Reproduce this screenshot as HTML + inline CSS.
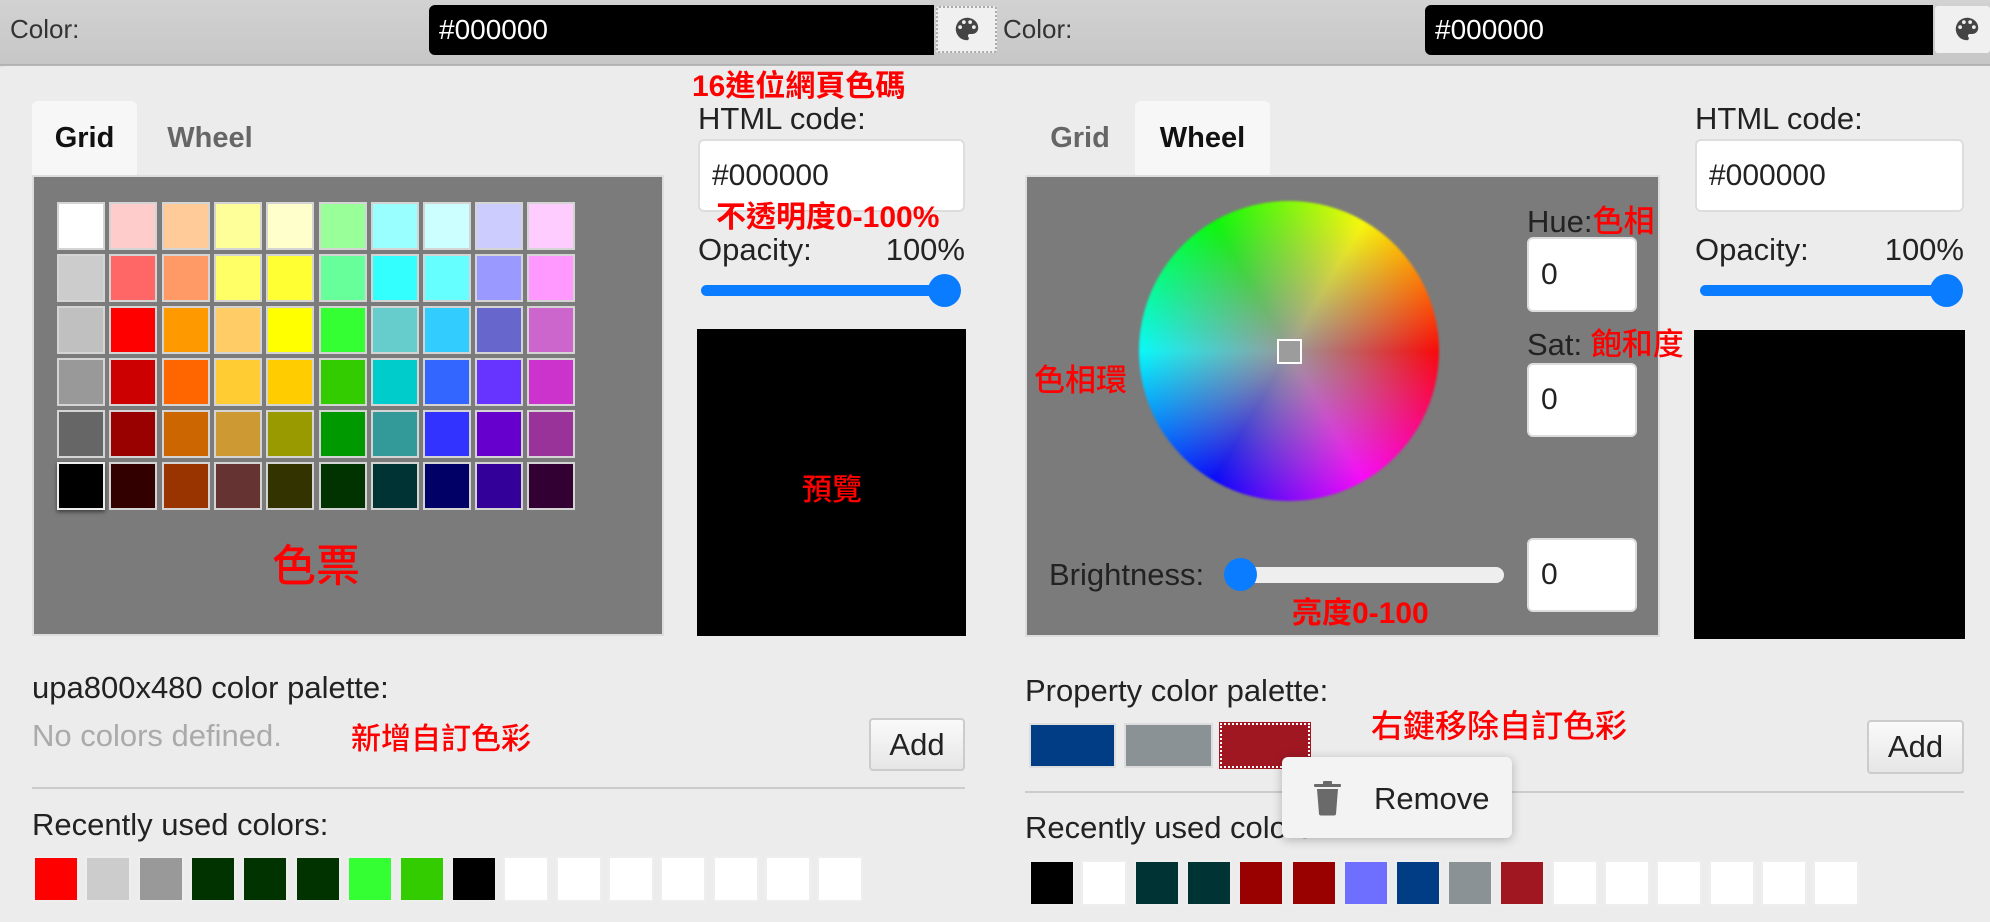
<!DOCTYPE html>
<html><head><meta charset="utf-8"><style>
*{box-sizing:border-box;margin:0;padding:0}
body{width:1990px;height:922px;overflow:hidden;background:#ececec;font-family:"Liberation Sans","Noto Sans CJK TC",sans-serif;color:#222;position:relative}
.a{position:absolute}
.bar{top:0;height:66px;background:linear-gradient(#d2d2d2,#c6c6c6)}
.lbl{font-size:26px;color:#333;line-height:30px}
.blk{background:#000;color:#fff;font-size:28px;line-height:50px;padding-left:10px;border-radius:6px 0 0 6px}
.pbtn{background:#f0f0f0;border-radius:3px}
.red{color:#f00;font-weight:bold;font-family:"Liberation Sans","Noto Sans CJK TC",sans-serif}
.redn{color:#f00;font-family:"Noto Sans CJK TC",sans-serif;font-weight:500}
.tab{font-size:29px;font-weight:bold;line-height:74px;text-align:center}
.gray{background:#7b7b7b;border:2px solid #ddd}
.sw{position:absolute;width:48px;height:48px;border:2px solid #d4d4d4}
.t{font-size:31px;line-height:34px;color:#222}
.inp{background:#fff;border:2px solid #ddd;border-radius:6px;font-size:30px;padding-left:12px}
.btn{background:linear-gradient(#fafafa,#e6e6e6);border:2px solid #ccc;border-radius:4px;font-size:31px;text-align:center}
.rs{position:absolute;width:46px;height:46px;border:2px solid #eee}
</style></head><body>
<div class="a bar" style="left:0;width:1990px"></div>
<div class="a lbl" style="left:10px;top:14px">Color:</div>
<div class="a blk" style="left:429px;top:5px;width:505px;height:50px">#000000</div>
<div class="a pbtn" style="left:936px;top:6px;width:61px;height:47px;border:2px dotted #aaa"></div>
<svg class="a" style="left:952px;top:14px" width="30" height="30" viewBox="0 0 24 24"><path fill="#444" d="M12 3a9 9 0 0 0 0 18c.8 0 1.5-.7 1.5-1.5 0-.4-.1-.7-.4-1-.2-.3-.4-.6-.4-1 0-.8.7-1.5 1.5-1.5H16c2.8 0 5-2.2 5-5 0-4.4-4-8-9-8zm-5.5 9a1.5 1.5 0 1 1 0-3 1.5 1.5 0 0 1 0 3zm3-4a1.5 1.5 0 1 1 0-3 1.5 1.5 0 0 1 0 3zm5 0a1.5 1.5 0 1 1 0-3 1.5 1.5 0 0 1 0 3zm3 4a1.5 1.5 0 1 1 0-3 1.5 1.5 0 0 1 0 3z"/></svg>
<div class="a lbl" style="left:1003px;top:14px">Color:</div>
<div class="a blk" style="left:1425px;top:5px;width:508px;height:50px">#000000</div>
<div class="a pbtn" style="left:1935px;top:6px;width:55px;height:47px"></div>
<svg class="a" style="left:1952px;top:14px" width="30" height="30" viewBox="0 0 24 24"><path fill="#444" d="M12 3a9 9 0 0 0 0 18c.8 0 1.5-.7 1.5-1.5 0-.4-.1-.7-.4-1-.2-.3-.4-.6-.4-1 0-.8.7-1.5 1.5-1.5H16c2.8 0 5-2.2 5-5 0-4.4-4-8-9-8zm-5.5 9a1.5 1.5 0 1 1 0-3 1.5 1.5 0 0 1 0 3zm3-4a1.5 1.5 0 1 1 0-3 1.5 1.5 0 0 1 0 3zm5 0a1.5 1.5 0 1 1 0-3 1.5 1.5 0 0 1 0 3zm3 4a1.5 1.5 0 1 1 0-3 1.5 1.5 0 0 1 0 3z"/></svg>
<div class="a" style="left:0;top:64px;width:1990px;height:4px;background:linear-gradient(rgba(0,0,0,.12),rgba(0,0,0,0))"></div>
<div class="a" style="left:0;top:66px;width:1990px;height:856px;background:#ececec;border-radius:8px 0 0 0"></div>

<!-- LEFT PANEL -->
<div class="a tab" style="left:32px;top:101px;width:105px;height:76px;background:#f7f7f7;border-radius:6px 6px 0 0;color:#111">Grid</div>
<div class="a tab" style="left:140px;top:101px;width:140px;color:#666">Wheel</div>
<div class="a gray" style="left:32px;top:175px;width:632px;height:461px"></div>
<div class="a" style="left:57px;top:202px">
<div class="sw" style="left:0;top:0;background:#fff"></div><div class="sw" style="left:52px;top:0;background:#fcc"></div><div class="sw" style="left:105px;top:0;background:#fc9"></div><div class="sw" style="left:157px;top:0;background:#ff9"></div><div class="sw" style="left:209px;top:0;background:#ffc"></div><div class="sw" style="left:262px;top:0;background:#9f9"></div><div class="sw" style="left:314px;top:0;background:#9ff"></div><div class="sw" style="left:366px;top:0;background:#cff"></div><div class="sw" style="left:418px;top:0;background:#ccf"></div><div class="sw" style="left:470px;top:0;background:#fcf"></div>
<div class="sw" style="left:0;top:52px;background:#ccc"></div><div class="sw" style="left:52px;top:52px;background:#f66"></div><div class="sw" style="left:105px;top:52px;background:#f96"></div><div class="sw" style="left:157px;top:52px;background:#ff6"></div><div class="sw" style="left:209px;top:52px;background:#ff3"></div><div class="sw" style="left:262px;top:52px;background:#6f9"></div><div class="sw" style="left:314px;top:52px;background:#3ff"></div><div class="sw" style="left:366px;top:52px;background:#6ff"></div><div class="sw" style="left:418px;top:52px;background:#99f"></div><div class="sw" style="left:470px;top:52px;background:#f9f"></div>
<div class="sw" style="left:0;top:104px;background:#c0c0c0"></div><div class="sw" style="left:52px;top:104px;background:#f00"></div><div class="sw" style="left:105px;top:104px;background:#f90"></div><div class="sw" style="left:157px;top:104px;background:#fc6"></div><div class="sw" style="left:209px;top:104px;background:#ff0"></div><div class="sw" style="left:262px;top:104px;background:#3f3"></div><div class="sw" style="left:314px;top:104px;background:#6cc"></div><div class="sw" style="left:366px;top:104px;background:#3cf"></div><div class="sw" style="left:418px;top:104px;background:#66c"></div><div class="sw" style="left:470px;top:104px;background:#c6c"></div>
<div class="sw" style="left:0;top:156px;background:#999"></div><div class="sw" style="left:52px;top:156px;background:#c00"></div><div class="sw" style="left:105px;top:156px;background:#f60"></div><div class="sw" style="left:157px;top:156px;background:#fc3"></div><div class="sw" style="left:209px;top:156px;background:#fc0"></div><div class="sw" style="left:262px;top:156px;background:#3c0"></div><div class="sw" style="left:314px;top:156px;background:#0cc"></div><div class="sw" style="left:366px;top:156px;background:#36f"></div><div class="sw" style="left:418px;top:156px;background:#63f"></div><div class="sw" style="left:470px;top:156px;background:#c3c"></div>
<div class="sw" style="left:0;top:208px;background:#666"></div><div class="sw" style="left:52px;top:208px;background:#900"></div><div class="sw" style="left:105px;top:208px;background:#c60"></div><div class="sw" style="left:157px;top:208px;background:#c93"></div><div class="sw" style="left:209px;top:208px;background:#990"></div><div class="sw" style="left:262px;top:208px;background:#090"></div><div class="sw" style="left:314px;top:208px;background:#399"></div><div class="sw" style="left:366px;top:208px;background:#33f"></div><div class="sw" style="left:418px;top:208px;background:#60c"></div><div class="sw" style="left:470px;top:208px;background:#939"></div>
<div class="sw" style="left:0;top:260px;background:#000;border-color:#eee;box-shadow:0 2px 4px rgba(0,0,0,.5)"></div><div class="sw" style="left:52px;top:260px;background:#300"></div><div class="sw" style="left:105px;top:260px;background:#930"></div><div class="sw" style="left:157px;top:260px;background:#633"></div><div class="sw" style="left:209px;top:260px;background:#330"></div><div class="sw" style="left:262px;top:260px;background:#030"></div><div class="sw" style="left:314px;top:260px;background:#033"></div><div class="sw" style="left:366px;top:260px;background:#006"></div><div class="sw" style="left:418px;top:260px;background:#309"></div><div class="sw" style="left:470px;top:260px;background:#303"></div>
</div>
<div class="a redn" style="left:272px;top:534px;font-size:44px;line-height:56px">色票</div>

<div class="a red" style="left:692px;top:70px;font-size:30px;line-height:34px">16進位網頁色碼</div>
<div class="a t" style="left:698px;top:102px">HTML code:</div>
<div class="a inp" style="left:698px;top:139px;width:267px;height:73px;line-height:69px">#000000</div>
<div class="a red" style="left:716px;top:201px;font-size:30px;line-height:34px">不透明度0-100%</div>
<div class="a t" style="left:698px;top:233px">Opacity:</div>
<div class="a t" style="left:860px;top:233px;width:105px;text-align:right">100%</div>
<div class="a" style="left:701px;top:285px;width:255px;height:11px;background:#0a7cff;border-radius:6px"></div>
<div class="a" style="left:928px;top:274px;width:33px;height:33px;background:#0a7cff;border-radius:50%"></div>
<div class="a" style="left:697px;top:329px;width:269px;height:307px;background:#000"></div>
<div class="a redn" style="left:802px;top:469px;font-size:30px;line-height:36px">預覽</div>

<div class="a t" style="left:32px;top:671px">upa800x480 color palette:</div>
<div class="a t" style="left:32px;top:719px;color:#aaa">No colors defined.</div>
<div class="a redn" style="left:351px;top:718px;font-size:30px;line-height:36px">新增自訂色彩</div>
<div class="a btn" style="left:869px;top:718px;width:96px;height:53px;line-height:49px">Add</div>
<div class="a" style="left:32px;top:787px;width:933px;height:2px;background:#ccc"></div>
<div class="a t" style="left:32px;top:808px">Recently used colors:</div>
<div class="a" style="left:33px;top:856px">
<div class="rs" style="left:0;background:#f00"></div><div class="rs" style="left:52px;background:#ccc"></div><div class="rs" style="left:105px;background:#999"></div><div class="rs" style="left:157px;background:#030"></div><div class="rs" style="left:209px;background:#030"></div><div class="rs" style="left:262px;background:#030"></div><div class="rs" style="left:314px;background:#3f3"></div><div class="rs" style="left:366px;background:#3c0"></div><div class="rs" style="left:418px;background:#000"></div><div class="rs" style="left:470px;background:#fff"></div><div class="rs" style="left:523px;background:#fff"></div><div class="rs" style="left:575px;background:#fff"></div><div class="rs" style="left:627px;background:#fff"></div><div class="rs" style="left:680px;background:#fff"></div><div class="rs" style="left:732px;background:#fff"></div><div class="rs" style="left:784px;background:#fff"></div>
</div>

<!-- RIGHT PANEL -->
<div class="a tab" style="left:1025px;top:101px;width:110px;color:#666">Grid</div>
<div class="a tab" style="left:1135px;top:101px;width:135px;height:76px;background:#f7f7f7;border-radius:6px 6px 0 0;color:#111">Wheel</div>
<div class="a gray" style="left:1025px;top:175px;width:635px;height:462px"></div>
<div class="a" style="left:1139px;top:201px;width:300px;height:300px;border-radius:50%;background:radial-gradient(circle,#9a9a9a 0%,rgba(154,154,154,.6) 30%,rgba(154,154,154,0) 75%),conic-gradient(from 90deg,#f00,#f0f 60deg,#00f 120deg,#0ff 180deg,#0f0 240deg,#ff0 300deg,#f00 360deg);filter:blur(1px)"></div>
<div class="a" style="left:1277px;top:339px;width:25px;height:25px;border:2px solid #fff;background:#9c9c9c"></div>
<div class="a redn" style="left:1034px;top:358px;font-size:31px;line-height:40px">色相環</div>
<div class="a t" style="left:1527px;top:202px">Hue:<span class="redn" style="font-size:31px">色相</span></div>
<div class="a inp" style="left:1527px;top:237px;width:110px;height:75px;line-height:71px">0</div>
<div class="a t" style="left:1527px;top:325px">Sat: <span class="redn" style="font-size:31px">飽和度</span></div>
<div class="a inp" style="left:1527px;top:363px;width:110px;height:74px;line-height:70px">0</div>
<div class="a t" style="left:1049px;top:558px;color:#222">Brightness:</div>
<div class="a" style="left:1232px;top:567px;width:272px;height:16px;background:#eee;border-radius:8px"></div>
<div class="a" style="left:1224px;top:558px;width:33px;height:33px;background:#0a7cff;border-radius:50%"></div>
<div class="a inp" style="left:1527px;top:538px;width:110px;height:74px;line-height:70px">0</div>
<div class="a red" style="left:1292px;top:596px;font-size:30px;line-height:36px">亮度0-100</div>

<div class="a t" style="left:1695px;top:102px">HTML code:</div>
<div class="a inp" style="left:1695px;top:139px;width:269px;height:73px;line-height:69px">#000000</div>
<div class="a t" style="left:1695px;top:233px">Opacity:</div>
<div class="a t" style="left:1860px;top:233px;width:104px;text-align:right">100%</div>
<div class="a" style="left:1700px;top:285px;width:256px;height:11px;background:#0a7cff;border-radius:6px"></div>
<div class="a" style="left:1930px;top:274px;width:33px;height:33px;background:#0a7cff;border-radius:50%"></div>
<div class="a" style="left:1694px;top:330px;width:271px;height:309px;background:#000"></div>

<div class="a t" style="left:1025px;top:674px">Property color palette:</div>
<div class="a" style="left:1029px;top:723px;width:87px;height:45px;background:#003d85;border:2px solid #ddd"></div>
<div class="a" style="left:1124px;top:723px;width:89px;height:45px;background:#8a9296;border:2px solid #ddd"></div>
<div class="a" style="left:1220px;top:723px;width:90px;height:45px;background:#a01722;border:2px dotted #fff;outline:1px solid #a01722"></div>
<div class="a redn" style="left:1371px;top:705px;font-size:32px;line-height:38px">右鍵移除自訂色彩</div>
<div class="a btn" style="left:1867px;top:720px;width:97px;height:54px;line-height:50px">Add</div>
<div class="a" style="left:1025px;top:791px;width:939px;height:2px;background:#ccc"></div>
<div class="a t" style="left:1025px;top:811px">Recently used colors:</div>
<div class="a" style="left:1029px;top:860px">
<div class="rs" style="left:0;background:#000"></div><div class="rs" style="left:52px;background:#fff"></div><div class="rs" style="left:105px;background:#033"></div><div class="rs" style="left:157px;background:#033"></div><div class="rs" style="left:209px;background:#900"></div><div class="rs" style="left:262px;background:#900"></div><div class="rs" style="left:314px;background:#6f6fff"></div><div class="rs" style="left:366px;background:#003d85"></div><div class="rs" style="left:418px;background:#8a9296"></div><div class="rs" style="left:470px;background:#a01722"></div><div class="rs" style="left:523px;background:#fff"></div><div class="rs" style="left:575px;background:#fff"></div><div class="rs" style="left:627px;background:#fff"></div><div class="rs" style="left:680px;background:#fff"></div><div class="rs" style="left:732px;background:#fff"></div><div class="rs" style="left:784px;background:#fff"></div>
</div>
<div class="a" style="left:1282px;top:757px;width:230px;height:81px;background:#f3f3f3;border-radius:6px;box-shadow:0 2px 10px rgba(0,0,0,.25)"></div>
<svg class="a" style="left:1313px;top:780px" width="30" height="36" viewBox="0 0 30 36"><rect x="1" y="4" width="27" height="3" rx="1" fill="#6a6a6a"/><rect x="10" y="1" width="9" height="4" rx="1" fill="#6a6a6a"/><path d="M4 9h21l-2 25a2 2 0 0 1-2 1.5H8a2 2 0 0 1-2-1.5z" fill="#6a6a6a"/></svg>
<div class="a t" style="left:1374px;top:782px;font-size:31px">Remove</div>
</body></html>
